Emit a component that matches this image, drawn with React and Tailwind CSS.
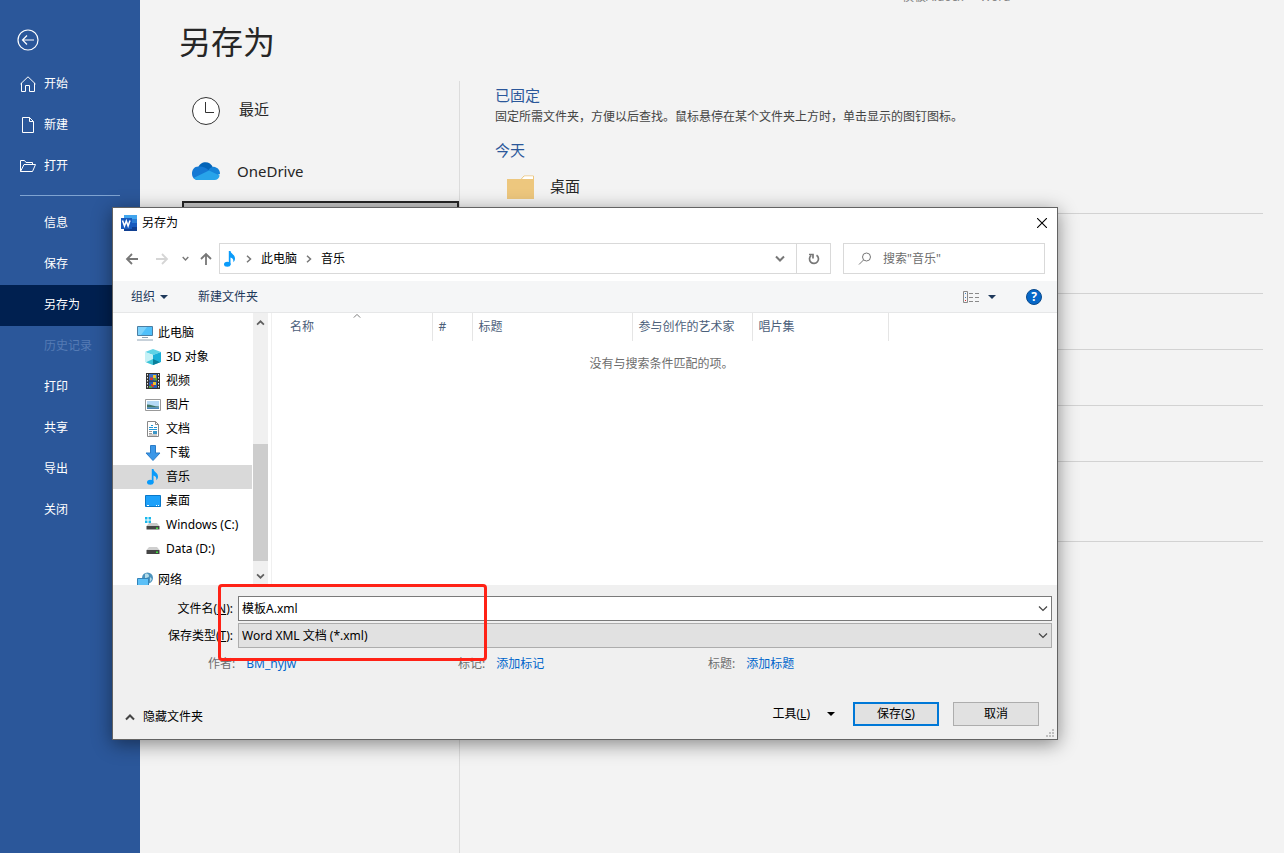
import React from "react";
import clsx from "clsx";

const mainMenu = [
  { label: "开始", icon: HomeIcon },
  { label: "新建", icon: FileIcon },
  { label: "打开", icon: OpenIcon },
];

const subMenu = [
  { label: "信息" },
  { label: "保存" },
  { label: "另存为", active: true },
  { label: "历史记录", disabled: true },
  { label: "打印" },
  { label: "共享" },
  { label: "导出" },
  { label: "关闭" },
];

const folders = [
  { label: "3D 对象", icon: CubeIcon },
  { label: "视频", icon: VideoIcon },
  { label: "图片", icon: PictureIcon },
  { label: "文档", icon: DocIcon },
  { label: "下载", icon: DownloadIcon },
  { label: "音乐", icon: MusicIcon, selected: true },
  { label: "桌面", icon: DesktopIcon },
  { label: "Windows (C:)", icon: SystemDriveIcon },
  { label: "Data (D:)", icon: DriveIcon },
];

const columns = [
  { label: "名称", width: "w-[150px] pl-2", sorted: true },
  { label: "#", width: "w-10 pl-1.5" },
  { label: "标题", width: "w-40 pl-1.5" },
  { label: "参与创作的艺术家", width: "w-[120px] pl-1.5" },
  { label: "唱片集", width: "w-[136px] pl-1.5" },
];

const meta = [
  { label: "作者:", value: "BM_hyjw" },
  { label: "标记:", value: "添加标记" },
  { label: "标题:", value: "添加标题" },
];

/* ---------- Icons ---------- */

function BackIcon() {
  return (
    <svg className="w-[22px] h-[22px]" viewBox="0 0 22 22" fill="none" stroke="#fff" strokeWidth="1.2">
      <circle cx="11" cy="11" r="10" />
      <path d="M17 11H5.5M10 6.5 5.5 11l4.5 4.5" />
    </svg>
  );
}

function HomeIcon() {
  return (
    <svg className="w-4 h-4" viewBox="0 0 16 16" fill="none" stroke="#fff">
      <path d="M.5 8 8 .8 15.5 8M1.5 7v8.5h4v-6h4v6h5V7" />
    </svg>
  );
}

function FileIcon() {
  return (
    <svg className="w-4 h-4" viewBox="0 0 16 16" fill="none" stroke="#fff">
      <path d="M2.5.5h7l4 4v11h-11zM9.5.5v4h4" />
    </svg>
  );
}

function OpenIcon() {
  return (
    <svg className="w-4 h-4" viewBox="0 0 16 16" fill="none" stroke="#fff">
      <path d="M.5 13.500v-11h4l1.500 2h6.500v2M.5 13.500l3.500-7h11.500l-3 7z" />
    </svg>
  );
}

function ClockIcon() {
  return (
    <svg className="w-7 h-7" viewBox="0 0 28 28" fill="#fff" stroke="#333">
      <circle cx="14" cy="14" r="13.5" />
      <path d="M13.5 5v10.5H22" fill="none" />
    </svg>
  );
}

function OneDriveIcon() {
  return (
    <svg className="w-7 h-5" viewBox="0 0 28 20">
      <path d="M6 7C8 0 18-1 21 6.500L16 11z" fill="#0364b8" />
      <path d="M6.500 5.500C2 5.500 0 9 0 12.500c0 4 2.500 6.500 6 6.500L17 9.500C14 6.500 10 5 6.500 5.500z" fill="#1579d4" />
      <path d="M16 10c2-4 6-5 8-3.500 3 1 4 4 4 6.500L22 15.500z" fill="#1683d8" />
      <path d="M1.500 17 17 9.500l10.700 5c-.5 2.500-2.500 4.500-5.200 4.500H6c-1.800 0-3.500-.8-4.500-2z" fill="#28a4ea" />
    </svg>
  );
}

function FolderIcon() {
  return (
    <svg className="w-7 h-6" viewBox="0 0 28 24">
      <path d="M13.500 5 17 1h9.500v6h-13z" fill="#fff" stroke="#edc77e" />
      <path d="M0 4h27v20H0z" fill="#edc77e" />
      <path d="M15.500 4 17.500 1.500h8.500V4z" fill="#fff" />
    </svg>
  );
}

function WordIcon() {
  return (
    <svg className="w-4 h-4" viewBox="0 0 16 16">
      <path d="M3 0h13v4H3z" fill="#41a5ee" />
      <path d="M3 4h13v4H3z" fill="#2b7cd3" />
      <path d="M3 8h13v4H3z" fill="#185abd" />
      <path d="M3 12h13v4H3z" fill="#103f91" />
      <path d="M0 3h11v11H0z" fill="#185abd" />
      <path d="M1.500 5.500 3.500 11 5.300 6l1.800 5L9 5.500" fill="none" stroke="#fff" strokeWidth="1.500" />
    </svg>
  );
}

function MusicIcon() {
  return (
    <svg className="w-4 h-4" viewBox="0 0 16 16" fill="#0a9bfa">
      <ellipse cx="5.300" cy="13.300" rx="3.300" ry="2.500" />
      <path d="M6.800 0h1.700c.3 3 4.500 3.500 4.500 7.500 0 1.800-.7 3-1.700 3.700.4-2.700-.6-4-2.800-4.700V13.500H6.800z" />
    </svg>
  );
}

function ComputerIcon() {
  return (
    <svg className="w-4 h-4" viewBox="0 0 16 16">
      <path d="M.5 1.500h15v9H.5z" fill="#4fc0fb" stroke="#4b7ea3" />
      <path d="M1 2h9l-6 8H1z" fill="#7cd2fc" />
      <path d="M5 12.500h6M0 15h16" stroke="#8fa4b5" />
    </svg>
  );
}

function CubeIcon() {
  return (
    <svg className="w-4 h-4" viewBox="0 0 16 16">
      <path d="M0 3 8 0l8 3-8 3z" fill="#5fd3e6" />
      <path d="M0 3l8 3v10l-8-3z" fill="#c5f1f6" />
      <path d="M16 3 8 6v10l8-3z" fill="#1aafd8" />
      <path d="M1 13.200 8 10v6z" fill="#3cc4d8" />
      <path d="M8 10l7 3.300L8 16z" fill="#0a7f99" />
    </svg>
  );
}

function VideoIcon() {
  return (
    <svg className="w-4 h-4" viewBox="0 0 16 16">
      <path d="M1 0h14v16H1z" fill="#333" />
      <path d="M2.500 1v15M13.500 1v15" stroke="#e8e8e8" strokeDasharray="1.500 1.500" />
      <path d="M4 1h8v6.500H4z" fill="#3c6fc4" />
      <path d="M4 8.500h8V15H4z" fill="#2b5cb4" />
      <path d="M5 4.500h3V7H5zM6 11h3v3H6z" fill="#d43a2c" />
      <path d="M8 2h3v3H8zM8 9h3v3H8z" fill="#eec52d" />
      <path d="M9 5h3v2.500H9zM4 13h3v2H4z" fill="#58a03c" />
    </svg>
  );
}

function PictureIcon() {
  return (
    <svg className="w-4 h-4" viewBox="0 0 16 16">
      <path d="M.5 2.500h15v11H.5z" fill="#fff" stroke="#999" />
      <path d="M2 4h12v8H2z" fill="#b5d9f5" />
      <path d="M2 7.500c4 0 7 2 12 2v1H2z" fill="#3f7566" />
      <path d="M2 10.500h12V12H2z" fill="#4b86b8" />
    </svg>
  );
}

function DocIcon() {
  return (
    <svg className="w-4 h-4" viewBox="0 0 16 16" fill="none">
      <path d="M2.500.5h8l3 3v12h-11z" fill="#fff" stroke="#888" />
      <path d="M10.500.5v3h3" stroke="#888" />
      <path d="M4 6.500h4M9 6.500h3M4 8.500h8M6 4.500h2" stroke="#2196d8" />
      <path d="M4 10.500h3M4 12.500h3M4 14h8" stroke="#999" />
      <path d="M8 10h4v3H8z" fill="#3b96c7" />
    </svg>
  );
}

function DownloadIcon() {
  return (
    <svg className="w-4 h-4" viewBox="0 0 16 16">
      <path d="M5.500.5h5V8H15l-7 7.500L1 8h4.500z" fill="#3a97e8" stroke="#2b7cc7" />
    </svg>
  );
}

function DesktopIcon() {
  return (
    <svg className="w-4 h-4" viewBox="0 0 16 16">
      <path d="M.5 2.500h15v11H.5z" fill="#1da1fa" stroke="#0a78c8" />
      <path d="M2 12.500h2M11 12.500h1M13 12.500h1" stroke="#fff" />
    </svg>
  );
}

function SystemDriveIcon() {
  return (
    <svg className="w-4 h-4" viewBox="0 0 16 16">
      <path d="M0 0h2.500v2.500H0zM3.500 0H6v2.500H3.500zM0 3.500h2.500V6H0zM3.500 3.500H6V6H3.500z" fill="#19b8ec" />
      <path d="M4 6h8l2.500 3h-13z" fill="#c9c9c9" />
      <path d="M1.500 9h13v3.500h-13z" fill="#454545" />
      <path d="M11 10.500h2V12h-2z" fill="#3fdf3f" />
    </svg>
  );
}

function DriveIcon() {
  return (
    <svg className="w-4 h-4" viewBox="0 0 16 16">
      <path d="M4 6h8l2.500 3h-13z" fill="#cfcfcf" />
      <path d="M1.500 9h13v4h-13z" fill="#454545" />
      <path d="M11 10.500h2V12h-2z" fill="#3fdf3f" />
    </svg>
  );
}

function NetworkIcon() {
  return (
    <svg className="w-4 h-4" viewBox="0 0 16 16">
      <circle cx="10.500" cy="6" r="5.500" fill="#4b93bd" />
      <path d="M8 2c2-1 4 0 4 2s-3 1-4 3zM13 5l2 2-2 3z" fill="#b4dbe8" />
      <path d="M.5 6.500h11v7H.5z" fill="#5cc0f7" stroke="#3483b8" />
    </svg>
  );
}

function Chevron({ className, width = 2 }) {
  return (
    <svg className={className} viewBox="0 0 10 7" fill="none" stroke="currentColor" strokeWidth={width}>
      <path d="M1 1.500 5 5.500 9 1.500" />
    </svg>
  );
}

function Arrow({ className }) {
  return (
    <svg className={className} viewBox="0 0 14 14" fill="none" stroke="currentColor" strokeWidth="1.800">
      <path d="M13 7H2M7 2 2 7l5 5" />
    </svg>
  );
}

function Caret() {
  return (
    <svg className="w-2 h-1" viewBox="0 0 8 4" fill="currentColor">
      <path d="M0 0h8L4 4z" />
    </svg>
  );
}

function PathArrow() {
  return (
    <svg className="w-1.5 h-2 text-[#777]" viewBox="0 0 6 8" fill="none" stroke="currentColor" strokeWidth="1.500">
      <path d="M1 .8 4.500 4 1 7.200" />
    </svg>
  );
}

function RefreshIcon() {
  return (
    <svg className="w-3 h-3" viewBox="0 0 12 12" fill="none" stroke="currentColor" strokeWidth="1.700">
      <path d="M8.500 2.200A4.500 4.500 0 1 1 3.200 2.400" />
      <path d="M1 1.500h4v4" />
    </svg>
  );
}

/* ---------- Backstage ---------- */

const Sidebar = () => (
  <nav className="w-[140px] shrink-0 bg-[#2b579a] text-white text-xs">
    <button aria-label="返回" className="block mt-[29px] ml-[17px] mb-3">
      <BackIcon />
    </button>
    {mainMenu.map((item) => (
      <button key={item.label} className="flex items-center w-full h-[41px] pl-5 gap-2">
        <item.icon />
        {item.label}
      </button>
    ))}
    <hr className="mx-5 mt-[9px] mb-[7px] border-[#7fa3d1]" />
    {subMenu.map((item) => (
      <button
        key={item.label}
        disabled={item.disabled}
        className={clsx(
          "block w-full h-[41px] pl-11 pb-0.5 text-left",
          item.active && "bg-[#002050]",
          item.disabled && "text-[#557bb5]"
        )}
      >
        {item.label}
      </button>
    ))}
  </nav>
);

const Backstage = () => (
  <main className="flex-1 flex flex-col min-w-0 text-[#262626]">
    <div className="h-0.5 flex items-end overflow-hidden pl-[762px] text-xs leading-[10px] text-[#888] whitespace-pre">
      模板A.docx{"  -  "}Word
    </div>
    <h1 className="pl-[39px] pt-4 h-[79px] text-[32px] leading-[48px]">另存为</h1>
    <div className="flex-1 flex">
      <div className="w-80 shrink-0 border-r border-[#dcdcdc] pl-[42px] text-[15px]">
        <button className="flex items-center w-full h-[60px] pl-2.5 gap-[19px]">
          <ClockIcon />
          <span className="pb-1">最近</span>
        </button>
        <button className="flex items-center w-full h-[60px] pl-2.5 gap-[17px]">
          <OneDriveIcon />
          OneDrive
        </button>
        <button className="flex items-center w-full h-[60px] pl-2.5 gap-[17px] bg-[#c6c6c6] border-2 border-[#262626]">
          <ComputerIcon />
          这台电脑
        </button>
      </div>
      <div className="flex-1 pl-[35px] pr-[21px]">
        <h2 className="pt-[3px] text-[15px] leading-[22px] text-[#2b579a]">已固定</h2>
        <p className="text-xs leading-[22px] text-[#444]">
          固定所需文件夹，方便以后查找。鼠标悬停在某个文件夹上方时，单击显示的图钉图标。
        </p>
        <h2 className="mt-[11px] text-[15px] leading-[22px] text-[#2b579a]">今天</h2>
        <button className="flex items-center w-full h-[53px] pl-3 gap-[15px] border-b border-[#d2d2d2] text-[15px]">
          <FolderIcon />
          <span className="pb-0.5">桌面</span>
        </button>
        <div className="h-20 border-b border-[#d2d2d2]" />
        <div className="h-14 border-b border-[#d2d2d2]" />
        <div className="h-14 border-b border-[#d2d2d2]" />
        <div className="h-14 border-b border-[#d2d2d2]" />
        <div className="h-20 border-b border-[#d2d2d2]" />
      </div>
    </div>
  </main>
);

/* ---------- Dialog ---------- */

const AddressBar = () => (
  <div className="flex items-start px-3 pt-1.5 pb-[7px] text-[#777]">
    <div className="flex items-center h-[31px]">
      <button aria-label="后退"><Arrow className="w-3.5 h-3.5" /></button>
      <button aria-label="前进" disabled className="ml-4 text-[#d5d5d5]"><Arrow className="w-3.5 h-3.5 rotate-180" /></button>
      <button aria-label="最近位置" className="ml-[13px]"><Chevron className="w-[7px] h-[5px]" /></button>
      <button aria-label="上移" className="ml-2.5 mr-1.5"><Arrow className="w-3.5 h-3.5 rotate-90" /></button>
    </div>
    <div className="flex-1 flex items-center h-[31px] pl-0.5 border border-[#d9d9d9] text-black">
      <MusicIcon />
      <div className="flex items-center ml-2 gap-[9px]">
        <PathArrow />
        <button>此电脑</button>
        <PathArrow />
        <button>音乐</button>
      </div>
      <button aria-label="展开路径" className="ml-auto mr-[11px] text-[#777]"><Chevron className="w-2.5 h-[7px]" /></button>
      <button aria-label="刷新" className="flex items-center justify-center w-[34px] h-full border-l border-[#d9d9d9] text-[#777]">
        <RefreshIcon />
      </button>
    </div>
    <label className="flex items-center w-[202px] h-[31px] ml-3 pl-3.5 border border-[#d9d9d9]">
      <svg className="w-3.5 h-3.5 mr-[11px]" viewBox="0 0 14 14" fill="none" stroke="#777">
        <circle cx="8.500" cy="5" r="4" />
        <path d="M5.500 8 1 12.500" />
      </svg>
      <input
        aria-label="搜索"
        placeholder={'搜索"音乐"'}
        className="flex-1 min-w-0 outline-none placeholder:text-[#6d6d6d]"
      />
    </label>
  </div>
);

const Toolbar = () => (
  <div className="flex items-center h-8 pl-[18px] pr-[15px] bg-[#f5f6f7] border-b border-[#e6e7e8] text-[#1e395b]">
    <button className="flex items-center gap-[5px]">组织 <Caret /></button>
    <button className="ml-[30px]">新建文件夹</button>
    <button aria-label="更改视图" className="ml-auto flex items-center gap-[9px]">
      <svg className="w-4 h-3" viewBox="0 0 16 12" fill="none" stroke="#8a8a8a">
        <path d="M.5.5h4v11h-4z" />
        <path d="M6 2.500h4M12 2.500h4M6 6.500h4M12 6.500h4M6 10.500h4M12 10.500h4" />
        <path d="M2 2.500h1M2 6.500h1" stroke="#3f7fc4" />
        <path d="M2 9.500h1" stroke="#d33" />
      </svg>
      <Caret />
    </button>
    <button
      aria-label="帮助"
      className="flex items-center justify-center w-4 h-4 ml-[30px] rounded-full border border-[#0a4a8c] bg-[#0667c8] text-white font-bold text-xs leading-3"
    >
      ?
    </button>
  </div>
);

const FolderTree = () => (
  <div className="w-[139px] shrink-0 pt-2 overflow-hidden">
    <button className="flex items-center w-full h-6 pl-6 gap-[5px]">
      <ComputerIcon />
      此电脑
    </button>
    {folders.map((f) => (
      <button
        key={f.label}
        className={clsx("flex items-center w-full h-6 pl-8 gap-[5px]", f.selected && "bg-[#d9d9d9]")}
      >
        <f.icon />
        <span className="whitespace-nowrap">{f.label}</span>
      </button>
    ))}
    <button className="flex items-center w-full h-6 mt-[7px] pl-6 gap-[5px]">
      <NetworkIcon />
      网络
    </button>
  </div>
);

const Browser = () => (
  <div className="flex h-[272px] bg-white">
    <FolderTree />
    <div className="flex flex-col items-center w-[15px] shrink-0 ml-px bg-[#f0f0f0] text-[#606060]">
      <button aria-label="向上滚动" className="h-[19px]"><Chevron className="w-[9px] h-[6px] rotate-180" /></button>
      <div className="w-full h-[117px] shrink-0 mt-28 bg-[#cdcdcd]" />
      <button aria-label="向下滚动" className="flex-1 pt-1.5"><Chevron className="w-[9px] h-[6px]" /></button>
    </div>
    <div className="flex-1 ml-[3px] pl-2.5 pr-2 border-l border-[#f0f0f0]">
      <table className="table-fixed w-[606px] text-[#4c607a]">
        <thead>
          <tr>
            {columns.map((c) => (
              <th
                key={c.label}
                className={clsx("relative h-7 border-r border-[#e5e5e5] text-left font-normal whitespace-nowrap", c.width)}
              >
                {c.label}
                {c.sorted && (
                  <Chevron className="absolute top-0 left-[71px] w-2 h-[6px] rotate-180 text-[#777]" width={1.2} />
                )}
              </th>
            ))}
          </tr>
        </thead>
      </table>
      <p className="pt-[15px] pr-2 text-center text-[#6d6d6d]">没有与搜索条件匹配的项。</p>
    </div>
  </div>
);

const Footer = () => (
  <div className="relative bg-[#f0f0f0] pt-[11px] pr-[5px]">
    <div className="flex items-center">
      <label htmlFor="filename" className="w-[120px] mr-[5px] text-right">
        文件名(<u>N</u>):
      </label>
      <div className="flex-1 flex items-center h-[25px] border border-[#7a7a7a] bg-white">
        <input id="filename" defaultValue="模板A.xml" className="flex-1 h-full pl-[3px] pb-0.5 outline-none" />
        <button aria-label="历史文件名" className="px-[3px] text-[#444]">
          <Chevron className="w-2.5 h-[7px]" width={1.2} />
        </button>
      </div>
    </div>
    <div className="flex items-center mt-0.5">
      <label htmlFor="filetype" className="w-[120px] mr-[5px] text-right">
        保存类型(<u>T</u>):
      </label>
      <div className="relative flex-1">
        <select id="filetype" className="block w-full h-[25px] pl-[3px] appearance-none border border-[#adadad] bg-[#e1e1e1]">
          <option>Word XML 文档 (*.xml)</option>
        </select>
        <Chevron className="absolute right-1 top-[9px] w-2.5 h-[7px] text-[#444] pointer-events-none" width={1.2} />
      </div>
    </div>
    <div className="flex pl-[95px] mt-1.5 leading-5">
      {meta.map((m) => (
        <div key={m.label} className="flex w-[250px] gap-[11px]">
          <span className="text-[#6d6d6d]">{m.label}</span>
          <a href="#" className="text-[#0066cc]">{m.value}</a>
        </div>
      ))}
    </div>
    <div className="flex items-center mt-7 pl-3 pr-[13px] pb-[13px]">
      <button className="flex items-center gap-2 pt-1.5">
        <Chevron className="w-2.5 h-[7px] rotate-180 text-[#444]" />
        隐藏文件夹
      </button>
      <button className="flex items-center ml-auto gap-[17px]">
        <span>工具(<u>L</u>)</span>
        <Caret />
      </button>
      <button className="w-[86px] h-6 ml-[18px] border-2 border-[#0078d7] bg-[#e1e1e1]">
        保存(<u>S</u>)
      </button>
      <button className="w-[86px] h-6 ml-3.5 border border-[#adadad] bg-[#e1e1e1]">取消</button>
    </div>
    <svg className="absolute right-[3px] bottom-0.5 w-2 h-2" viewBox="0 0 8 8" fill="#bfbfbf">
      <path d="M6 0h2v2H6zM3 3h2v2H3zM6 3h2v2H6zM0 6h2v2H0zM3 6h2v2H3zM6 6h2v2H6z" />
    </svg>
    <div className="absolute -top-px left-[105px] w-[269px] h-[77px] rounded border-3 border-[#ff2216] pointer-events-none" />
  </div>
);

const SaveDialog = () => (
  <div
    role="dialog"
    aria-label="另存为"
    className="absolute top-[207px] left-28 right-[226px] border border-[#636363] bg-white text-xs text-black shadow-[0_4px_18px_rgba(0,0,0,0.45)]"
  >
    <div className="flex items-center h-[29px] pl-2 pr-2.5 gap-[5px]">
      <WordIcon />
      另存为
      <button aria-label="关闭" className="ml-auto">
        <svg className="w-2.5 h-2.5" viewBox="0 0 10 10" fill="none" stroke="#000" strokeWidth="1.100">
          <path d="M0 0l10 10M10 0 0 10" />
        </svg>
      </button>
    </div>
    <AddressBar />
    <Toolbar />
    <Browser />
    <Footer />
  </div>
);

const App = () => (
  <div className="relative flex min-h-screen bg-[#f3f3f3] font-['Noto_Sans','Noto_Sans_CJK_SC',sans-serif]">
    <Sidebar />
    <Backstage />
    <SaveDialog />
  </div>
);

export default App;
